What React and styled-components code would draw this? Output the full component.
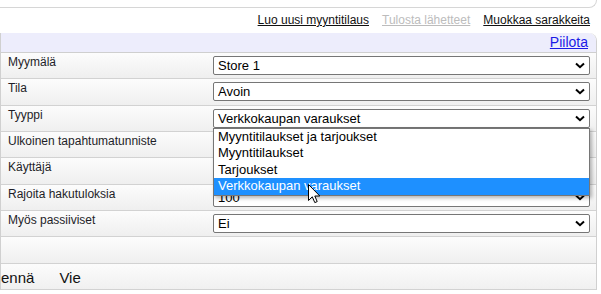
import React from 'react';
import styled, { createGlobalStyle } from 'styled-components';

const GlobalStyle = createGlobalStyle`
  body {
    margin: 0;
    background: #fff;
    font-family: "Liberation Sans", Arial, sans-serif;
  }
`;

const Page = styled.div`
  width: 601px;
  height: 294px;
  overflow: hidden;
  position: relative;
`;

const TopBox = styled.div`
  width: 597px;
  height: 8px;
  box-sizing: border-box;
  border-bottom: 1px solid #d6d6d6;
  border-right: 1px solid #d6d6d6;
  border-bottom-right-radius: 10px;
`;

const LinkBar = styled.div`
  display: flex;
  justify-content: flex-end;
  gap: 13px;
  height: 25px;
  box-sizing: border-box;
  padding: 5px 11px 0 0;
  font-size: 12px;
  line-height: 15px;
`;

const TopLink = styled.a`
  color: ${p => (p.$disabled ? '#bcbcbc' : '#111')};
  text-decoration: underline;
  cursor: pointer;
`;

const Panel = styled.div`
  width: 597px;
  box-sizing: border-box;
  border-left: 1px solid #d0d0d0;
  border-right: 1px solid #d0d0d0;
  border-top-right-radius: 8px;
`;

const PanelHeader = styled.div`
  display: flex;
  justify-content: flex-end;
  align-items: center;
  height: 20px;
  box-sizing: border-box;
  padding-right: 8px;
  background: #ededfc;
  border-bottom: 1px solid #cfcfcf;
  border-top-right-radius: 8px;
`;

const HideLink = styled.a`
  color: #1a1ae6;
  font-size: 14px;
  line-height: 17px;
  text-decoration: underline;
  cursor: pointer;
`;

const Row = styled.div`
  display: grid;
  grid-template-columns: 212px 1fr;
  height: 26.33px;
  box-sizing: border-box;
  border-bottom: 1px solid #d2d2d2;
  background: linear-gradient(#fcfcfc, #efefef);
`;

const Label = styled.div`
  padding: 2px 0 0 7px;
  font-size: 12px;
  line-height: 15px;
  color: #1e1e28;
`;

const Cell = styled.div`
  position: relative;
  padding: 3px 6px 0 0;
`;

const SelectBox = styled.div`
  display: flex;
  align-items: center;
  justify-content: space-between;
  height: 19px;
  box-sizing: border-box;
  border: 1px solid #767676;
  border-radius: 2px;
  background: #fff;
  padding: 0 4px 0 4px;
  font-size: 13px;
  line-height: 17px;
  color: #000;
`;

const Chevron = () => (
  <svg width="10" height="7" viewBox="0 0 10 7">
    <path d="M1 1.5 L5 5.2 L9 1.5" fill="none" stroke="#000" strokeWidth="2" />
  </svg>
);

const OptionList = styled.div`
  position: absolute;
  top: 22px;
  left: 0;
  right: 6px;
  z-index: 2;
  border: 1px solid #767676;
  background: #fff;
  box-shadow: 2px 2px 4px rgba(0, 0, 0, 0.3);
`;

const Option = styled.div`
  height: 16.5px;
  padding-left: 4px;
  font-size: 13px;
  line-height: 16.5px;
  color: ${p => (p.$active ? '#fff' : '#000')};
  background: ${p => (p.$active ? '#1e90ff' : '#fff')};
`;

const BlankRow = styled.div`
  height: 26.33px;
  box-sizing: border-box;
  border-bottom: 1px solid #d2d2d2;
  background: linear-gradient(#fcfcfc, #efefef);
`;

const Toolbar = styled.div`
  display: flex;
  gap: 25px;
  height: 26.33px;
  box-sizing: border-box;
  padding-top: 5px;
  border-bottom: 1px solid #d2d2d2;
  background: linear-gradient(#fcfcfc, #f0f0f0);
  font-size: 15px;
  line-height: 17px;
  color: #111;
`;

const ToolButton = styled.span`
  cursor: pointer;
`;

const Pointer = styled.svg`
  position: absolute;
  left: 308px;
  top: 184px;
  z-index: 5;
`;

const fields = [
  { label: 'Myymälä', value: 'Store 1' },
  { label: 'Tila', value: 'Avoin' },
  { label: 'Tyyppi', value: 'Verkkokaupan varaukset', open: true },
  { label: 'Ulkoinen tapahtumatunniste', value: '' },
  { label: 'Käyttäjä', value: '' },
  { label: 'Rajoita hakutuloksia', value: '100' },
  { label: 'Myös passiiviset', value: 'Ei' },
];

const typeOptions = [
  'Myyntitilaukset ja tarjoukset',
  'Myyntitilaukset',
  'Tarjoukset',
  'Verkkokaupan varaukset',
];

export default function App() {
  return (
    <Page>
      <GlobalStyle />
      <TopBox />
      <LinkBar>
        <TopLink>Luo uusi myyntitilaus</TopLink>
        <TopLink $disabled>Tulosta lähetteet</TopLink>
        <TopLink>Muokkaa sarakkeita</TopLink>
      </LinkBar>
      <Panel>
        <PanelHeader>
          <HideLink>Piilota</HideLink>
        </PanelHeader>
        {fields.map(f => (
          <Row key={f.label}>
            <Label>{f.label}</Label>
            <Cell>
              <SelectBox>
                <span>{f.value}</span>
                <Chevron />
              </SelectBox>
              {f.open && (
                <OptionList>
                  {typeOptions.map(o => (
                    <Option key={o} $active={o === f.value}>
                      {o}
                    </Option>
                  ))}
                </OptionList>
              )}
            </Cell>
          </Row>
        ))}
        <BlankRow />
        <Toolbar>
          <ToolButton>ennä</ToolButton>
          <ToolButton>Vie</ToolButton>
        </Toolbar>
      </Panel>
      <Pointer width="13" height="20" viewBox="0 0 13 20">
        <path
          d="M0.5 0.5 L0.5 16.5 L4.3 12.8 L6.8 18.6 L9.2 17.6 L6.8 12 L11.8 12 Z"
          fill="#fff"
          stroke="#000"
          strokeWidth="1"
          strokeLinejoin="round"
        />
      </Pointer>
    </Page>
  );
}
